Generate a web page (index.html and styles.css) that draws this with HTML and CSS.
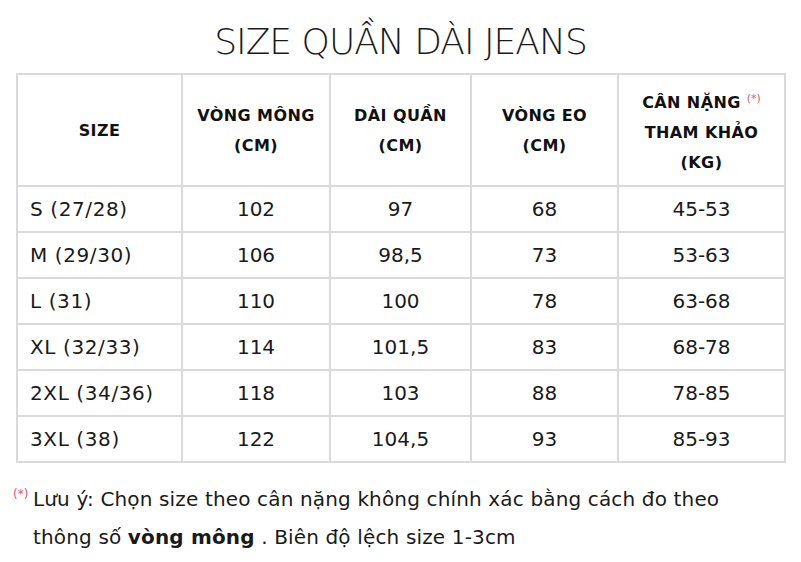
FILE: index.html
```html
<!DOCTYPE html>
<html lang="vi">
<head>
<meta charset="utf-8">
<title>Size quần dài jeans</title>
<link rel="stylesheet" href="styles.css">
</head>
<body>
<div class="page">
  <h1 class="title">SIZE QUẦN DÀI JEANS</h1>
  <table class="size-table">
    <colgroup>
      <col class="c1"><col class="c2"><col class="c3"><col class="c4"><col class="c5">
    </colgroup>
    <thead>
      <tr>
        <th>SIZE</th>
        <th>VÒNG MÔNG<br>(CM)</th>
        <th>DÀI QUẦN<br>(CM)</th>
        <th>VÒNG EO<br>(CM)</th>
        <th>CÂN NẶNG <span class="star">(*)</span><br>THAM KHẢO<br>(KG)</th>
      </tr>
    </thead>
    <tbody>
      <tr><td class="size">S (27/28)</td><td>102</td><td>97</td><td>68</td><td>45-53</td></tr>
      <tr><td class="size">M (29/30)</td><td>106</td><td>98,5</td><td>73</td><td>53-63</td></tr>
      <tr><td class="size">L (31)</td><td>110</td><td>100</td><td>78</td><td>63-68</td></tr>
      <tr><td class="size">XL (32/33)</td><td>114</td><td>101,5</td><td>83</td><td>68-78</td></tr>
      <tr><td class="size">2XL (34/36)</td><td>118</td><td>103</td><td>88</td><td>78-85</td></tr>
      <tr><td class="size">3XL (38)</td><td>122</td><td>104,5</td><td>93</td><td>85-93</td></tr>
    </tbody>
  </table>
  <p class="note"><span class="note-star">(*)</span>Lưu ý: Chọn size theo cân nặng không chính xác bằng cách đo theo<br>thông số <b>vòng mông</b> . Biên độ lệch size 1-3cm</p>
</div>
</body>
</html>
```

FILE: styles.css
```css
html, body {
  margin: 0;
  padding: 0;
  background: #fff;
}
.page {
  width: 801px;
  height: 562px;
  font-family: "DejaVu Sans", "Liberation Sans", sans-serif;
  color: #1a1a1a;
  overflow: hidden;
}
.title {
  margin: 0;
  height: 73px;
  line-height: 84px;
  text-align: center;
  font-size: 36px;
  font-weight: 200;
  letter-spacing: -1px;
  color: #1a1a1a;
}
.size-table {
  margin-left: 16px;
  width: 768px;
  border-collapse: collapse;
  table-layout: fixed;
}
.c1 { width: 165px; }
.c2 { width: 148px; }
.c3 { width: 141px; }
.c4 { width: 147px; }
.c5 { width: 167px; }
.size-table th,
.size-table td {
  border: 2px solid #dadada;
  text-align: center;
  padding: 0;
}
.size-table th {
  height: 108px;
  font-size: 16px;
  line-height: 30px;
  font-weight: bold;
  letter-spacing: 0.4px;
  color: #111;
  padding-top: 2px;
}
.size-table td {
  height: 44px;
  font-size: 20px;
  color: #1a1a1a;
}
.size-table td.size {
  text-align: left;
  padding-left: 12px;
  letter-spacing: 0.6px;
}
.star {
  color: #e0556a;
  font-weight: normal;
  font-size: 11px;
  letter-spacing: 0;
  vertical-align: 6px;
}
.note {
  margin: 17px 0 0 33px;
  font-size: 20px;
  line-height: 38px;
  color: #1a1a1a;
  position: relative;
  letter-spacing: 0.15px;
}
.note b {
  font-weight: bold;
}
.note-star {
  position: absolute;
  left: -20px;
  top: -5px;
  font-size: 12px;
  letter-spacing: 0;
  color: #e0556a;
}
```
